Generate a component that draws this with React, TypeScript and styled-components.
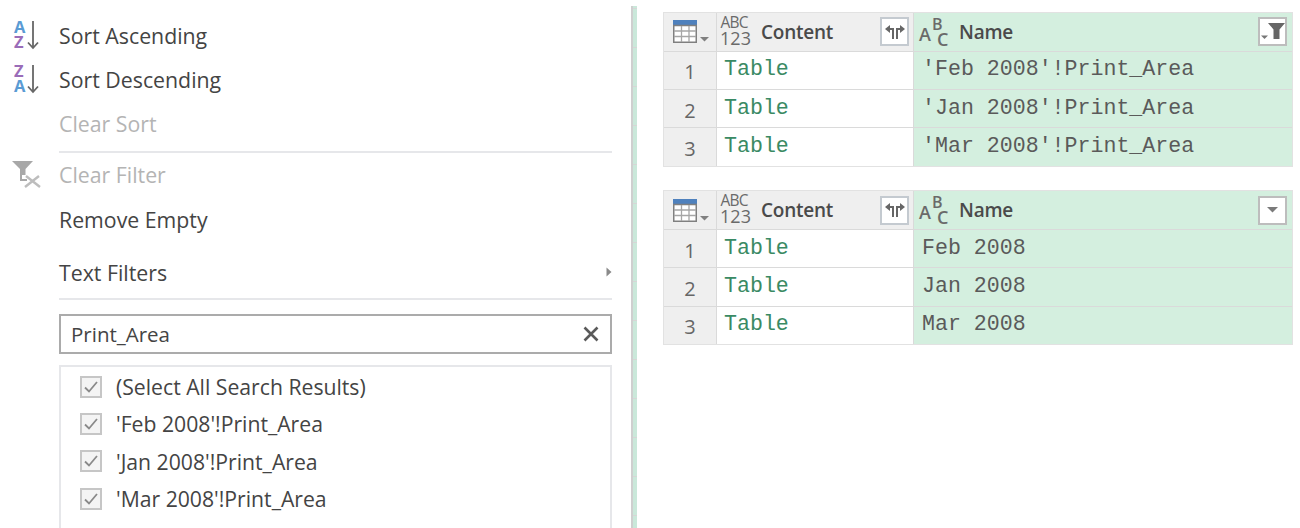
import React from 'react';
import styled, { createGlobalStyle } from 'styled-components';

const UI_FONT = '"Open Sans", "Noto Sans", sans-serif';

const GlobalStyle = createGlobalStyle`
  html, body {
    margin: 0;
    padding: 0;
    background: #fff;
    overflow: hidden;
  }
`;

const Page = styled.div`
  display: flex;
  width: 1300px;
  height: 528px;
  overflow: hidden;
  font-family: ${UI_FONT};
`;

const FilterMenu = styled.div`
  width: 631px;
  flex: none;
  display: flex;
  flex-direction: column;
  padding-top: 13px;
  box-sizing: border-box;
`;

const MenuRow = styled.div<{ $h: number; $pad?: number; $disabled?: boolean }>`
  display: flex;
  align-items: center;
  box-sizing: border-box;
  height: ${(p) => p.$h}px;
  padding-top: ${(p) => p.$pad ?? 0}px;
  width: 612px;
  flex: none;
  font-size: 21.3px;
  color: ${(p) => (p.$disabled ? '#b4b4b4' : '#444')};
`;

const IconSlot = styled.div`
  width: 59px;
  flex: none;
  display: flex;
  align-items: center;
  padding-left: 12px;
  box-sizing: border-box;
`;

const MenuLabel = styled.span`
  flex: 1;
`;

const Separator = styled.div<{ $top?: number; $after?: number }>`
  flex: none;
  height: 2px;
  width: 553px;
  margin: ${(p) => p.$top ?? 0}px 0 ${(p) => p.$after ?? 0}px 59px;
  background: #e6e7ea;
`;

const SearchBox = styled.div`
  flex: none;
  margin-left: 59px;
  width: 553px;
  height: 40px;
  box-sizing: border-box;
  border: 2px solid #ababab;
  display: flex;
  align-items: center;
  justify-content: space-between;
  padding: 0 11px 0 10px;
  font-size: 20.5px;
  color: #444;
`;

const ResultList = styled.div`
  flex: none;
  margin: 11px 0 0 59px;
  width: 553px;
  height: 170px;
  box-sizing: border-box;
  border: 2px solid #e6e7ea;
  padding: 1px 0 0 19px;
`;

const ResultRow = styled.div`
  display: flex;
  align-items: center;
  gap: 14px;
  height: 37.3px;
  font-size: 21.2px;
  color: #444;
`;

const CheckBox = styled.span`
  width: 22px;
  height: 22px;
  box-sizing: border-box;
  border: 2px solid #c6c6c6;
  background: #f4f4f4;
  display: flex;
  align-items: center;
  justify-content: center;
  flex: none;
`;

const Divider = styled.div`
  flex: none;
  width: 6px;
  height: 522px;
  margin-top: 6px;
  border-left: 2px solid #cfcfcf;
  box-sizing: border-box;
  background: linear-gradient(to bottom, #cae8da 0 38px, #d6d6d6 38px 39px) 0 3px / 100% 39px;
`;

const QueryPane = styled.div`
  flex: 1;
  display: flex;
  flex-direction: column;
  gap: 23.5px;
  padding: 12px 0 0 26px;
`;

const Grid = styled.div`
  width: 628px;
  display: grid;
  grid-template-columns: 52px 196px 1fr;
  grid-template-rows: 37.6px;
  grid-auto-rows: 37.4px;
  gap: 1px;
  background: #dadada;
  border: 1px solid #e2e2e2;
`;

const CornerCell = styled.div`
  background: #efefef;
  display: flex;
  align-items: center;
  justify-content: center;
  padding-left: 2px;
`;

const HeaderCell = styled.div<{ $selected?: boolean }>`
  display: flex;
  align-items: center;
  background: ${(p) => (p.$selected ? '#d4efdf' : '#efefef')};
  padding: 0 ${(p) => (p.$selected ? '5px' : '4px')} 0 ${(p) => (p.$selected ? '4px' : '3px')};
`;

const ColumnName = styled.span`
  flex: 1;
  margin-left: 8px;
  font-size: 19px;
  font-weight: 600;
  letter-spacing: -0.25px;
  color: #4a4a4a;
`;

const HeaderButton = styled.div<{ $tint?: boolean }>`
  width: 29px;
  height: 29px;
  box-sizing: border-box;
  border: 2px solid ${(p) => (p.$tint ? '#c4cad0' : '#bdbdbd')};
  background: #fff;
  display: flex;
  align-items: center;
  justify-content: center;
  flex: none;
`;

const RowNumber = styled.div`
  background: #efefef;
  display: flex;
  align-items: center;
  justify-content: center;
  padding-top: 3px;
  font-size: 20px;
  color: #666;
`;

const ValueCell = styled.div<{ $selected?: boolean }>`
  display: flex;
  align-items: center;
  padding-left: ${(p) => (p.$selected ? 8 : 7)}px;
  padding-bottom: 2px;
  background: ${(p) => (p.$selected ? '#d4efdf' : '#fff')};
  color: ${(p) => (p.$selected ? '#5a5a5a' : '#3a8a64')};
  font-family: "Liberation Mono", monospace;
  font-size: 21.6px;
  white-space: pre;
`;

const GlyphIcon = styled.svg`
  flex: none;
  overflow: visible;
`;

const IconText = styled.text<{ $size: number; $color?: string; $weight?: number }>`
  font-family: "Open Sans", sans-serif;
  font-size: ${(p) => p.$size}px;
  font-weight: ${(p) => p.$weight ?? 600};
  fill: ${(p) => p.$color ?? '#6a6a6a'};
`;

const BLUE = '#5a9bd4';
const PURPLE = '#9a6cb8';

const SortIcon = ({ descending }: { descending?: boolean }) => (
  <GlyphIcon width="30" height="30" viewBox="0 0 30 30">
    <IconText x="2" y="13" $size={16.5} $weight={700} $color={descending ? PURPLE : BLUE}>
      {descending ? 'Z' : 'A'}
    </IconText>
    <IconText x="2" y="28" $size={16.5} $weight={700} $color={descending ? BLUE : PURPLE}>
      {descending ? 'A' : 'Z'}
    </IconText>
    <path d="M21 1V27.5" stroke="#666" strokeWidth="1.8" fill="none" />
    <path d="M16 22.5L21 28L26 22.5" stroke="#666" strokeWidth="1.8" fill="none" />
  </GlyphIcon>
);

const ClearFilterIcon = () => (
  <svg width="30" height="30" viewBox="0 0 30 30" style={{ marginTop: 2 }}>
    <path d="M0 1H21L13.5 9V15H8V9Z" fill="#a8a8a8" />
    <path d="M9 14V20H15" stroke="#a8a8a8" strokeWidth="2" fill="none" />
    <path d="M13 27L27 16M14 16L28 27" stroke="#bdbdbd" strokeWidth="2.4" fill="none" />
  </svg>
);

const CloseIcon = () => (
  <svg width="16" height="16" viewBox="0 0 16 16">
    <path d="M1.5 1.5L14.5 14.5M14.5 1.5L1.5 14.5" stroke="#5a5a5a" strokeWidth="2.6" fill="none" />
  </svg>
);

const RightChevron = () => (
  <svg width="6" height="10" viewBox="0 0 6 10">
    <path d="M0.5 0.5L5.5 5L0.5 9.5Z" fill="#8a8a8a" />
  </svg>
);

const CheckMark = () => (
  <svg width="14" height="12" viewBox="0 0 14 12">
    <path d="M1 6.5L5 10.5L13 1" stroke="#8a8a8a" strokeWidth="1.8" fill="none" />
  </svg>
);

const TableIcon = () => (
  <svg width="36" height="23" viewBox="0 0 36 23">
    <rect x="0" y="0" width="24" height="6" fill="#4f81bd" />
    <rect x="0.75" y="5.5" width="22.5" height="16.75" fill="#fff" stroke="#808080" strokeWidth="1.5" />
    <path d="M1 11H23M1 16.5H23M8.5 6V22M16 6V22" stroke="#a6a6a6" strokeWidth="1.3" fill="none" />
    <path d="M27 17H36L31.5 21.5Z" fill="#808080" />
  </svg>
);

const AnyTypeIcon = () => (
  <GlyphIcon width="33" height="30" viewBox="0 0 33 30">
    <IconText x="0.5" y="11" $size={15.5} $weight={500} textLength={28}>ABC</IconText>
    <IconText x="0" y="28" $size={18} $weight={500} textLength={31}>123</IconText>
  </GlyphIcon>
);

const TextTypeIcon = () => (
  <GlyphIcon width="33" height="30" viewBox="0 0 33 30">
    <IconText x="1" y="24" $size={18}>A</IconText>
    <IconText x="14" y="13" $size={16}>B</IconText>
    <IconText x="19" y="29" $size={18}>C</IconText>
  </GlyphIcon>
);

const ExpandIcon = () => (
  <svg width="20" height="14" viewBox="0 0 20 14">
    <path d="M0 4L5 0V3H9V14H7V5H5V8Z" fill="#666" />
    <path d="M20 4L15 0V3H11V14H13V5H15V8Z" fill="#666" />
  </svg>
);

const FilterIcon = () => (
  <svg width="24" height="17" viewBox="0 0 24 17">
    <path d="M7 0H24L18.5 6.5V16H12.5V6.5Z" fill="#666" />
    <path d="M0 12.5H7L3.5 16Z" fill="#777" />
  </svg>
);

const DropIcon = () => (
  <svg width="11" height="6" viewBox="0 0 11 6">
    <path d="M0 0H11L5.5 5.5Z" fill="#7a7a7a" />
  </svg>
);

const QueryTable = ({ rows, filtered }: { rows: string[]; filtered?: boolean }) => (
  <Grid>
    <CornerCell>
      <TableIcon />
    </CornerCell>
    <HeaderCell>
      <AnyTypeIcon />
      <ColumnName>Content</ColumnName>
      <HeaderButton $tint>
        <ExpandIcon />
      </HeaderButton>
    </HeaderCell>
    <HeaderCell $selected>
      <TextTypeIcon />
      <ColumnName>Name</ColumnName>
      <HeaderButton>{filtered ? <FilterIcon /> : <DropIcon />}</HeaderButton>
    </HeaderCell>
    {rows.map((row, i) => (
      <React.Fragment key={row}>
        <RowNumber>{i + 1}</RowNumber>
        <ValueCell>Table</ValueCell>
        <ValueCell $selected>{row}</ValueCell>
      </React.Fragment>
    ))}
  </Grid>
);

const searchResults = [
  '(Select All Search Results)',
  "'Feb 2008'!Print_Area",
  "'Jan 2008'!Print_Area",
  "'Mar 2008'!Print_Area",
];

export default function App() {
  return (
    <Page>
      <GlobalStyle />
      <FilterMenu>
        <MenuRow $h={44}>
          <IconSlot>
            <SortIcon />
          </IconSlot>
          <MenuLabel>Sort Ascending</MenuLabel>
        </MenuRow>
        <MenuRow $h={44}>
          <IconSlot>
            <SortIcon descending />
          </IconSlot>
          <MenuLabel>Sort Descending</MenuLabel>
        </MenuRow>
        <MenuRow $h={44} $disabled>
          <IconSlot />
          <MenuLabel>Clear Sort</MenuLabel>
        </MenuRow>
        <Separator $top={6} />
        <MenuRow $h={42} $disabled>
          <IconSlot>
            <ClearFilterIcon />
          </IconSlot>
          <MenuLabel>Clear Filter</MenuLabel>
        </MenuRow>
        <MenuRow $h={48}>
          <IconSlot />
          <MenuLabel>Remove Empty</MenuLabel>
        </MenuRow>
        <MenuRow $h={55} $pad={3}>
          <IconSlot />
          <MenuLabel>Text Filters</MenuLabel>
          <RightChevron />
        </MenuRow>
        <Separator $after={14} />
        <SearchBox>
          Print_Area
          <CloseIcon />
        </SearchBox>
        <ResultList>
          {searchResults.map((label) => (
            <ResultRow key={label}>
              <CheckBox>
                <CheckMark />
              </CheckBox>
              {label}
            </ResultRow>
          ))}
        </ResultList>
      </FilterMenu>
      <Divider />
      <QueryPane>
        <QueryTable
          filtered
          rows={["'Feb 2008'!Print_Area", "'Jan 2008'!Print_Area", "'Mar 2008'!Print_Area"]}
        />
        <QueryTable rows={['Feb 2008', 'Jan 2008', 'Mar 2008']} />
      </QueryPane>
    </Page>
  );
}
